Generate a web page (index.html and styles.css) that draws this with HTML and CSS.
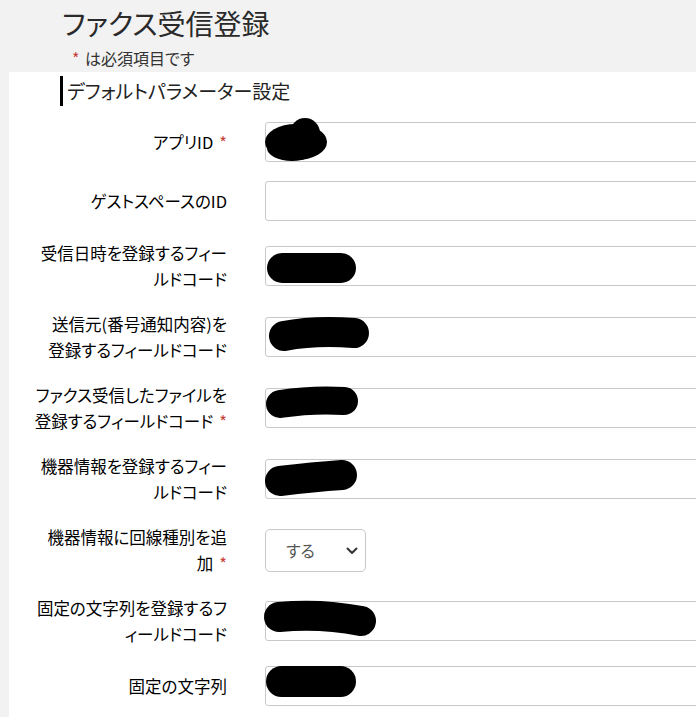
FILE: index.html
```html
<!DOCTYPE html>
<html lang="ja">
<head>
<meta charset="utf-8">
<title>ファクス受信登録</title>
<link rel="stylesheet" href="styles.css">
</head>
<body>
<header class="page-head">
  <h1 class="title">ファクス受信登録</h1>
  <p class="note"><span class="req-note">*</span> は必須項目です</p>
</header>
<main class="panel">
  <h2 class="section">デフォルトパラメーター設定</h2>
  <div class="rows">
    <div class="row">
      <label class="label">アプリID<span class="req">*</span></label>
      <div class="field">
        <svg class="redact" width="80" height="50" viewBox="0 0 80 50"><ellipse cx="31" cy="20" rx="31" ry="18"/><circle cx="40" cy="11" r="15"/><ellipse cx="27" cy="26" rx="25" ry="13"/></svg>
      </div>
    </div>
    <div class="row">
      <label class="label">ゲストスペースのID</label>
      <div class="field"></div>
    </div>
    <div class="row">
      <label class="label">受信日時を登録するフィー<br>ルドコード</label>
      <div class="field">
        <svg class="redact" width="100" height="44" viewBox="0 0 100 44"><rect x="2" y="7" width="89" height="30" rx="15"/></svg>
      </div>
    </div>
    <div class="row">
      <label class="label">送信元(番号通知内容)を<br>登録するフィールドコード</label>
      <div class="field">
        <svg class="redact" width="120" height="44" viewBox="0 0 120 44"><path class="stroke" d="M19 19 Q50 13 89 16" stroke-width="30"/></svg>
      </div>
    </div>
    <div class="row">
      <label class="label">ファクス受信したファイルを<br>登録するフィールドコード<span class="req">*</span></label>
      <div class="field">
        <svg class="redact" width="120" height="44" viewBox="0 0 120 44"><path class="stroke" d="M15 16 Q48 11 79 13" stroke-width="28"/></svg>
      </div>
    </div>
    <div class="row">
      <label class="label">機器情報を登録するフィー<br>ルドコード</label>
      <div class="field">
        <svg class="redact" width="120" height="44" viewBox="0 0 120 44"><path class="stroke" d="M15 22 Q48 18 77 16" stroke-width="30"/></svg>
      </div>
    </div>
    <div class="row">
      <label class="label">機器情報に回線種別を追<br>加<span class="req">*</span></label>
      <div class="select-wrap">
        <select class="select"><option>する</option><option>しない</option></select>
        <svg class="chevron" width="12" height="8" viewBox="0 0 12 8"><path d="M1.5 1.5 L6 6 L10.5 1.5"/></svg>
      </div>
    </div>
    <div class="row">
      <label class="label">固定の文字列を登録するフ<br>ィールドコード</label>
      <div class="field">
        <svg class="redact" width="130" height="44" viewBox="0 0 130 44"><path class="stroke" d="M14 16 Q55 12 96 20" stroke-width="30"/></svg>
      </div>
    </div>
    <div class="row">
      <label class="label">固定の文字列</label>
      <div class="field">
        <svg class="redact" width="100" height="44" viewBox="0 0 100 44"><rect x="1" y="0" width="90" height="31" rx="15.5"/></svg>
      </div>
    </div>
  </div>
</main>
</body>
</html>
```
FILE: styles.css
```css
html, body {
  margin: 0;
  padding: 0;
  overflow: hidden;
}
body {
  background: #f2f2f2;
  font-family: "Noto Sans CJK JP", "Noto Sans", sans-serif;
  font-feature-settings: "palt";
  color: #222;
  height: 717px;
}
.page-head {
  height: 72px;
  box-sizing: border-box;
  padding-top: 4px;
}
.title {
  margin: 0;
  padding-left: 62px;
  font-size: 28px;
  line-height: 38px;
  font-weight: 400;
  color: #2a2a2a;
}
.note {
  margin: 5px 0 0;
  padding-left: 72px;
  font-size: 16px;
  line-height: 22px;
  color: #333;
}
.req-note {
  color: #c9403a;
  margin-right: 2px;
}
.req {
  color: #c9403a;
  margin-left: 6px;
}
.panel {
  margin-left: 9px;
  background: #fff;
  min-height: 645px;
  padding-top: 4px;
  box-sizing: border-box;
}
.section {
  margin: 0 0 0 51px;
  border-left: 3px solid #000;
  padding-left: 4px;
  font-size: 19px;
  line-height: 30px;
  font-weight: 400;
  color: #222;
}
.rows {
  display: flex;
  flex-direction: column;
  gap: 19px;
  margin-top: 16px;
  padding-left: 18px;
}
.row {
  display: flex;
  align-items: center;
}
.label {
  flex: none;
  width: 200px;
  margin-right: 38px;
  text-align: right;
  font-size: 16.5px;
  font-weight: 400;
  line-height: 26px;
  color: #000;
}
.field {
  flex: none;
  position: relative;
  width: 480px;
  height: 40px;
  box-sizing: border-box;
  border: 1px solid #c8c8c8;
  border-radius: 3px;
  background: #fff;
}
.redact {
  position: absolute;
  left: -1px;
  top: -1px;
  overflow: visible;
  fill: #000;
}
.redact .stroke {
  fill: none;
  stroke: #000;
  stroke-linecap: round;
}
.select-wrap {
  position: relative;
  flex: none;
  width: 101px;
  height: 43px;
}
.select {
  appearance: none;
  -webkit-appearance: none;
  width: 101px;
  height: 43px;
  box-sizing: border-box;
  border: 1px solid #c8c8c8;
  border-radius: 5px;
  background: #fff;
  padding: 0 0 0 20px;
  font-family: "Noto Sans CJK JP", sans-serif;
  font-feature-settings: "palt";
  font-size: 16px;
  color: #555;
}
.chevron {
  position: absolute;
  right: 8px;
  top: 18px;
  fill: none;
  stroke: #333;
  stroke-width: 2;
  stroke-linecap: round;
  stroke-linejoin: round;
  pointer-events: none;
}
```
